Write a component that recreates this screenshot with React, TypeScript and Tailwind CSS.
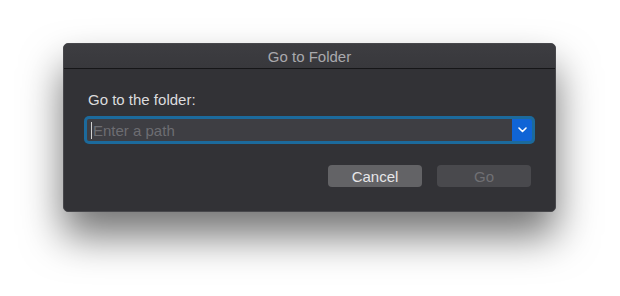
import React from "react";

export default function App() {
  return (
    <div
      className="w-[620px] h-[296px] bg-white relative overflow-hidden"
      style={{ fontFamily: '"Liberation Sans", Arial, sans-serif' }}
    >
      <div className="absolute left-[63px] top-[43px] w-[493px] h-[169px] rounded-[5px] bg-[#323236] border border-[#48484c] shadow-[0_24px_40px_rgba(0,0,0,0.55)] flex flex-col overflow-hidden">
        <div className="h-[25px] shrink-0 bg-gradient-to-b from-[#3d3d41] to-[#38383c] border-b border-[#161618] flex items-center justify-center">
          <span className="text-[15px] text-[#a9a9ad] leading-none">Go to Folder</span>
        </div>
        <div className="flex flex-col px-[20px] pt-[23px]">
          <div className="text-[15px] text-[#dcdcde] leading-none pl-[4px]">Go to the folder:</div>
          <div className="mt-[9px] h-[28px] rounded-[5px] bg-[#1c6a9c] p-[3px] flex">
            <div className="flex-1 bg-[#3e3e43] flex items-center rounded-l-[2px]">
              <div className="w-[1px] h-[17px] bg-[#d0d0d0] ml-[4px]" />
              <span className="text-[15px] text-[#6d6d72] leading-none ml-[1px]">Enter a path</span>
            </div>
            <div className="w-[20px] bg-[#1064d6] rounded-r-[3px] flex items-center justify-center">
              <svg width="9" height="6" viewBox="0 0 9 6">
                <path d="M1 1 L4.5 4.5 L8 1" stroke="#ffffff" strokeWidth="1.6" fill="none" strokeLinecap="round" strokeLinejoin="round" />
              </svg>
            </div>
          </div>
          <div className="mt-[21px] flex justify-end gap-[15px] pr-[4px]">
            <div className="w-[94px] h-[22px] rounded-[4px] bg-[#636366] flex items-center justify-center text-[15px] text-[#e6e6e8] leading-none">
              Cancel
            </div>
            <div className="w-[94px] h-[22px] rounded-[4px] bg-[#49494d] flex items-center justify-center text-[15px] text-[#707074] leading-none">
              Go
            </div>
          </div>
        </div>
      </div>
    </div>
  );
}
